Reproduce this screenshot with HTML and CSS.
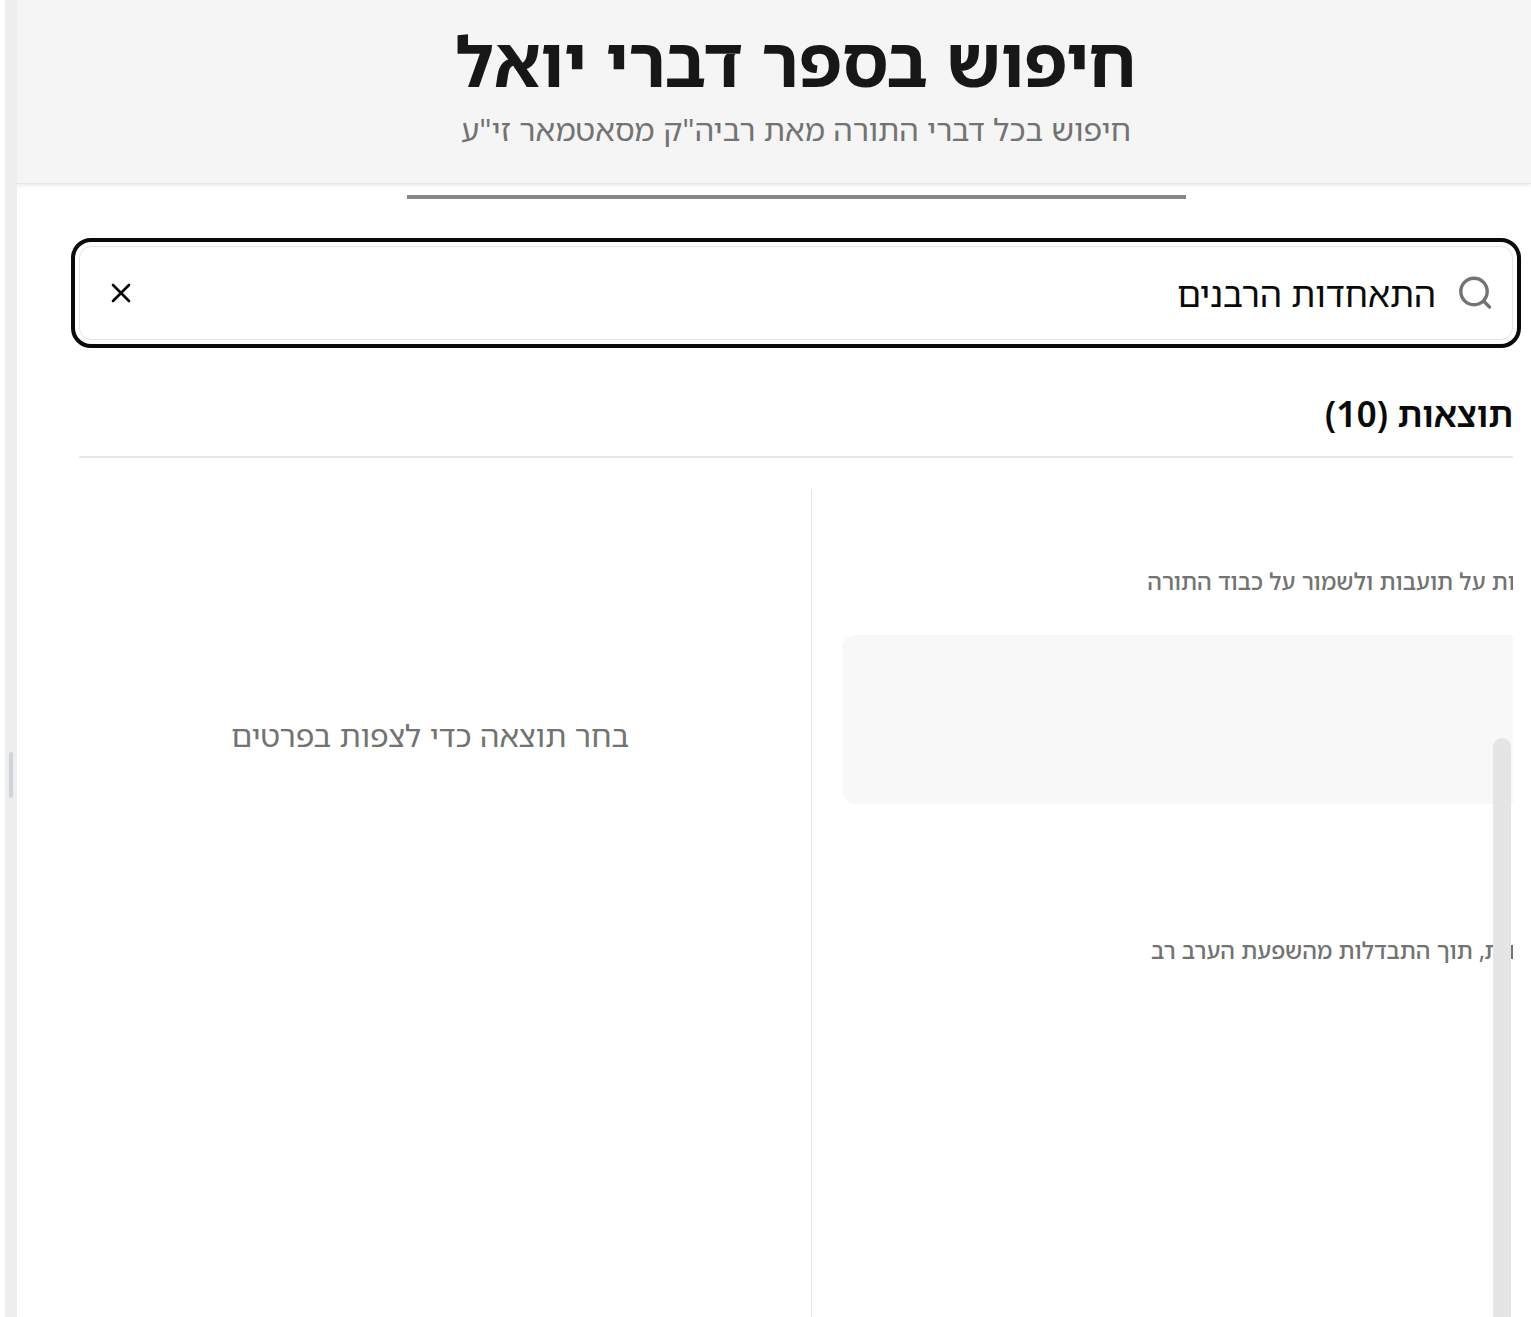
FILE: index.html
```html
<!DOCTYPE html>
<html lang="he" dir="rtl">
<head>
<meta charset="utf-8">
<title>חיפוש בספר דברי יואל</title>
<link rel="stylesheet" href="styles.css">
</head>
<body>
<div class="app">
  <div class="divider"><span class="grip"></span></div>
  <div class="page">
    <header class="header">
      <h1 class="title">חיפוש בספר דברי יואל</h1>
      <p class="subtitle">חיפוש בכל דברי התורה מאת רביה"ק מסאטמאר זי"ע</p>
    </header>
    <main class="content">
      <div class="progress"></div>
      <form class="search">
        <svg class="search-icon" viewBox="0 0 38 38" aria-hidden="true"><circle cx="18" cy="17.5" r="13.2"/><path d="m28 27.500 5.500 5.500"/></svg>
        <input class="search-input" type="text" aria-label="חיפוש" value="התאחדות הרבנים">
        <button class="clear" type="button" aria-label="נקה"><svg class="clear-icon" viewBox="0 0 24 24" aria-hidden="true"><path d="M18 6 6 18M6 6l12 12"/></svg></button>
      </form>
      <h2 class="results-title">תוצאות (10)</h2>
      <div class="columns">
        <section class="list">
          <div class="item"><p class="item-text">ות על תועבות ולשמור על כבוד התורה</p></div>
          <div class="item item-active"></div>
          <div class="item"><p class="item-text">וות, תוך התבדלות מהשפעת הערב רב</p></div>
          <span class="scroll-thumb"></span>
        </section>
        <section class="details"><p class="empty">בחר תוצאה כדי לצפות בפרטים</p></section>
      </div>
    </main>
  </div>
</div>
</body>
</html>
```
FILE: styles.css
```css
* { box-sizing: border-box; margin: 0; }
body { background: #fff; color: #0a0a0a; font-family: "Noto Sans Hebrew", "Noto Sans", sans-serif; }
.app { display: flex; flex-direction: row-reverse; height: 100vh; overflow: hidden; }
.divider { width: 12px; margin-left: 5px; padding: 752px 4px 0; background: #eee; }
.grip { display: block; height: 46px; border-radius: 2px; background: #ced4da; }
.page { display: flex; flex: 1; flex-direction: column; min-width: 0; }
.header { height: 184px; padding: 15px 18px 0 62px; border-bottom: 1px solid #e5e5e5; background: #f5f5f5; text-align: center; box-shadow: 0 1px 4px rgba(0,0,0,.1); }
.title { color: #171717; font-size: 69px; line-height: 90px; }
.subtitle { color: #737373; font-size: 31px; line-height: 48px; }
.content { display: flex; flex: 1; flex-direction: column; min-height: 0; padding: 11px 18px 0 62px; }
.progress { width: 779px; height: 4px; margin: 0 auto; background: #888; }
.search { display: flex; align-items: center; gap: 20px; height: 94px; margin-top: 47px; padding: 0 18px 0 25px; border: 1px solid #e5e5e5; border-radius: 12px; outline: 4px solid #0a0a0a; outline-offset: 4px; }
.search-icon { width: 38px; height: 38px; fill: none; stroke: #737373; stroke-width: 3; stroke-linecap: round; }
.search-input { flex: 1; min-width: 0; border: 0; outline: 0; padding: 2px 0 0; background: none; color: #0a0a0a; font: 35px/48px "Noto Sans Hebrew", "Noto Sans", sans-serif; }
.clear { display: flex; padding: 0; border: 0; background: none; }
.clear-icon { width: 32px; height: 32px; fill: none; stroke: #0a0a0a; stroke-width: 2; stroke-linecap: round; }
.results-title { margin-top: 49px; padding-bottom: 17px; border-bottom: 2px solid #e5e5e5; font-size: 35px; line-height: 50px; font-weight: 600; }
.columns { display: flex; flex: 1; min-height: 0; margin-top: 31px; }
.list { position: relative; width: calc(49% - 1px); padding: 0 0 0 31px; border-left: 1px solid #e5e5e5; overflow: hidden; }
.item { height: 169px; margin-bottom: 16px; padding-top: 76px; }
.item:first-child { height: 130px; }
.item-active { margin-bottom: 54px; border-radius: 12px 0 0 12px; background: #f8f8f8; }
.item-text { margin-right: -2px; color: #737373; font-size: 23px; line-height: 32px; font-weight: 500; white-space: nowrap; }
.scroll-thumb { position: absolute; top: 249px; right: 2px; bottom: 0; width: 18px; border-radius: 9px 9px 0 0; background: #e5e5e5; }
.search-icon circle, .search-icon path { stroke-width: 3.4px; }
.details { flex: 1; padding-top: 222px; padding-right: 30px; text-align: center; }
.empty { color: #737373; font-size: 31px; line-height: 48px; }
```
